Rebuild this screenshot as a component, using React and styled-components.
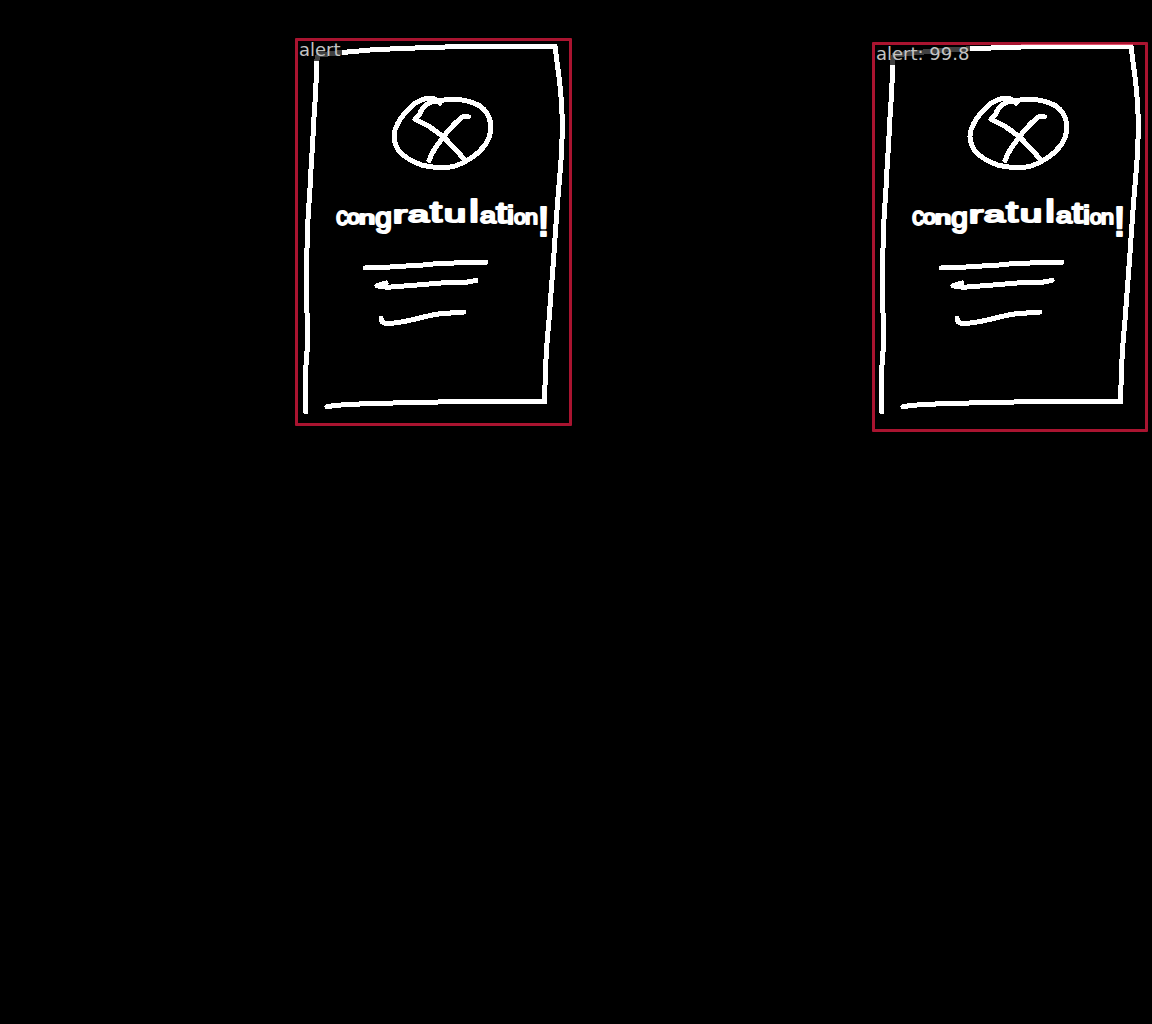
import React from "react";
import styled, { createGlobalStyle } from "styled-components";

const GlobalStyle = createGlobalStyle`
  html, body { margin: 0; background: #000; }
`;

const Comparison = styled.main`
  display: grid;
  grid-template-columns: repeat(2, 576px);
  width: 1152px;
  height: 1024px;
  overflow: hidden;
  background: #000;
`;

const Panel = styled.section`
  position: relative;
  height: 576px;
`;

const Drawing = styled.svg`
  display: block;
  width: 576px;
  height: 576px;
  fill: none;
  stroke: #fff;
  stroke-width: 5;
  stroke-linecap: round;
  stroke-linejoin: round;
  shape-rendering: crispEdges;
`;

const Lettering = styled.text`
  font-family: "Liberation Sans", sans-serif;
  fill: #fff;
  stroke: #fff;
  stroke-width: 2;
`;

/* Detection frame laid over the drawing */
const Detection = styled.div`
  position: absolute;
  box-sizing: border-box;
  left: ${(p) => p.$box[0]}px;
  top: ${(p) => p.$box[1]}px;
  width: ${(p) => p.$box[2]}px;
  height: ${(p) => p.$box[3]}px;
  border: 3px solid rgba(220, 26, 62, 0.77);
  border-radius: 1px;
`;

const Label = styled.span`
  display: block;
  width: ${(p) => p.$width}px;
  height: 20px;
  background: rgba(0, 0, 0, 0.75);
  color: #c4c4c4;
  font: 18px/17px "DejaVu Sans", sans-serif;
  white-space: nowrap;
  text-indent: 1px;
`;

/* character, x, baseline, size, drawn width */
const letters = [
  ["c", 336, 225, 26, 12],
  ["o", 347, 224, 20, 13],
  ["n", 359, 224, 18, 16],
  ["g", 375, 227, 28, 17],
  ["r", 393, 223, 23, 14],
  ["a", 408, 222, 22, 21],
  ["t", 430, 222, 29, 12],
  ["u", 444, 222, 23, 22],
  ["l", 469, 222, 31, 10],
  ["a", 480, 223, 22, 16],
  ["t", 496, 223, 29, 11],
  ["i", 507, 224, 26, 7],
  ["o", 514, 224, 21, 12],
  ["n", 525, 224, 21, 13],
  ["!", 537, 236, 43, 13],
];

function smoothPath(points) {
  return points.slice(1).reduce((path, point, i) => {
    const before = points[Math.max(i - 1, 0)];
    const start = points[i];
    const after = points[Math.min(i + 2, points.length - 1)];
    const c1 = [start[0] + (point[0] - before[0]) / 6, start[1] + (point[1] - before[1]) / 6];
    const c2 = [point[0] - (after[0] - start[0]) / 6, point[1] - (after[1] - start[1]) / 6];
    return `${path} C${c1} ${c2} ${point}`;
  }, `M${points[0]}`);
}

const strokes = [
  [[440, 103], [436, 99.5], [427, 98.2], [415, 103.5], [401.7, 117], [395, 130], [394.3, 140], [398.3, 150], [408.3, 158.7], [421.7, 165], [438.3, 167.5], [455, 166], [471.7, 157.7], [485, 145], [490.5, 132], [489.2, 118], [481.7, 107.3], [468.3, 101.3], [453, 99.3], [440, 100.5], [429, 103], [422, 109.5], [419, 115], [415, 119.3]],
  [[415, 119.3], [428.3, 126], [443.3, 137], [455, 149], [465, 160]],
  [[468.5, 117], [463.5, 116.5], [453.5, 125], [443.3, 137], [433.5, 151], [429, 160.5]],
];

function Sketch() {
  return (
    <Drawing viewBox="0 0 576 576">
      <path d="M342 52.5 L318 55 L316.5 62 C316.5 85 315.5 100 314 117 C313 142 311 165 310.5 180 C307 225 306.5 250 306.5 280 L307.5 345 L306 365 L305.7 412" />
      <path d="M342 52.5 L370 50 L400 48.5 L430 47.5 L460 46.5 L555 46.3 L559 77 C561 93 562.5 113 562.3 132 C561.8 150 560.8 166 559.5 180 C557.5 200 555.5 232 553.5 260 L549 320 C546.5 345 545 365 544.7 402 L452 401.7 L407 402.7 L370 403.5 L343 404.8 L327 406.5" />
      {strokes.map((points, index) => (
        <path key={index} d={smoothPath(points)} />
      ))}
      <path d="M365 268 L390 267 L423 265 L440 263.3 L486 262.3" />
      <path d="M386 283 L377 285.8 L387 287.3 L417 285 L447 282.5 L465 282.5 L476 280.5" />
      <path d="M381 318 C381 323 385 324 390 323.5 C410 322 427 315 440 313.8 L464 312" />
      <Lettering>
        {letters.map(([character, x, y, size, length], index) => (
          <tspan key={index} x={x} y={y} fontSize={size} textLength={length} lengthAdjust="spacingAndGlyphs">
            {character}
          </tspan>
        ))}
      </Lettering>
    </Drawing>
  );
}

const detections = [
  { label: "alert", box: [295, 38, 277, 388], labelWidth: 44 },
  { label: "alert: 99.8", box: [296, 42, 276, 390], labelWidth: 95 },
];

export default function App() {
  return (
    <>
      <GlobalStyle />
      <Comparison>
        {detections.map(({ label, box, labelWidth }) => (
          <Panel key={label}>
            <Sketch />
            <Detection $box={box}>
              <Label $width={labelWidth}>{label}</Label>
            </Detection>
          </Panel>
        ))}
      </Comparison>
    </>
  );
}
